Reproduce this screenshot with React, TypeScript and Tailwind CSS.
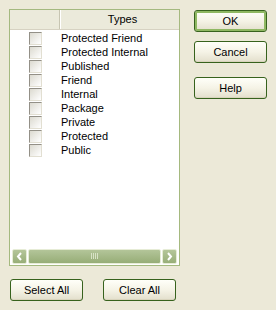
import React from "react";

const types = [
  "Protected Friend",
  "Protected Internal",
  "Published",
  "Friend",
  "Internal",
  "Package",
  "Private",
  "Protected",
  "Public",
];

const XpButton = ({ label, isDefault = false }: { label: string; isDefault?: boolean }) => {
  return (
    <button
      className={
        "w-[73px] h-[22px] rounded-[3px] border border-[#37621d] bg-gradient-to-b from-[#fffff9] via-[#f5f3e6] to-[#e3dfcc] text-[11px] text-black " +
        (isDefault ? "shadow-[inset_0_0_0_2px_#8fb862]" : "shadow-[inset_0_-1px_0_#d9d4bd]")
      }
    >
      {label}
    </button>
  );
};

const Checkbox = () => (
  <div className="w-[13px] h-[13px] border border-[#939087] border-r-[#e2dfd2] border-b-[#e2dfd2] bg-gradient-to-br from-[#dcdad0] to-white" />
);

const ScrollArrow = ({ dir }: { dir: "left" | "right" }) => (
  <div className="w-[15px] h-[15px] rounded-[2px] border border-[#e6ecd6] bg-gradient-to-b from-[#b5c69a] to-[#98ae78] flex items-center justify-center">
    <svg width="7" height="9" viewBox="0 0 7 9">
      <path
        d={dir === "left" ? "M5 1 L2 4.5 L5 8" : "M2 1 L5 4.5 L2 8"}
        stroke="white"
        strokeWidth="2"
        fill="none"
      />
    </svg>
  </div>
);

export default function App() {
  return (
    <div
      className="w-[276px] h-[310px] bg-[#ece9d8] relative"
      style={{ fontFamily: "Tahoma, 'Liberation Sans', Arial, sans-serif" }}
    >
      <div className="flex pt-[9px] pl-[9px]">
        <div className="w-[171px] h-[257px] border border-[#a5b97f] bg-white flex flex-col">
          <div className="flex h-[20px] bg-[#ebeadb] border-b border-[#d6d2c2] text-[11px]">
            <div className="w-[50px] border-r border-[#c7c5b2] shadow-[1px_0_0_white]" />
            <div className="flex-1 flex items-center justify-center pl-[6px]">Types</div>
          </div>
          <div className="flex-1 flex flex-col pt-[1px]">
            {types.map((t) => (
              <div key={t} className="flex items-center h-[14px] text-[11px]">
                <div className="w-[50px] flex justify-center pl-[1px]">
                  <Checkbox />
                </div>
                <span className="pl-[1px] leading-none">{t}</span>
              </div>
            ))}
          </div>
          <div className="h-[17px] flex items-center gap-[1px] px-[2px] pb-[1px]">
            <ScrollArrow dir="left" />
            <div className="flex-1 h-[15px] rounded-[2px] border border-[#e6ecd6] bg-gradient-to-b from-[#b3c599] to-[#97ad77] flex items-center justify-center">
              <svg width="8" height="6" viewBox="0 0 8 6">
                <path d="M0.5 0V6M2.5 0V6M4.5 0V6M6.5 0V6" stroke="#d8e2c6" strokeWidth="1" />
              </svg>
            </div>
            <ScrollArrow dir="right" />
          </div>
        </div>
        <div className="flex flex-col gap-[9px] pl-[14px] pt-[1px]">
          <XpButton label="OK" isDefault />
          <XpButton label="Cancel" />
          <div className="pt-[3px]">
            <XpButton label="Help" />
          </div>
        </div>
      </div>
      <div className="flex gap-[20px] pl-[10px] pt-[13px]">
        <XpButton label="Select All" />
        <XpButton label="Clear All" />
      </div>
    </div>
  );
}
